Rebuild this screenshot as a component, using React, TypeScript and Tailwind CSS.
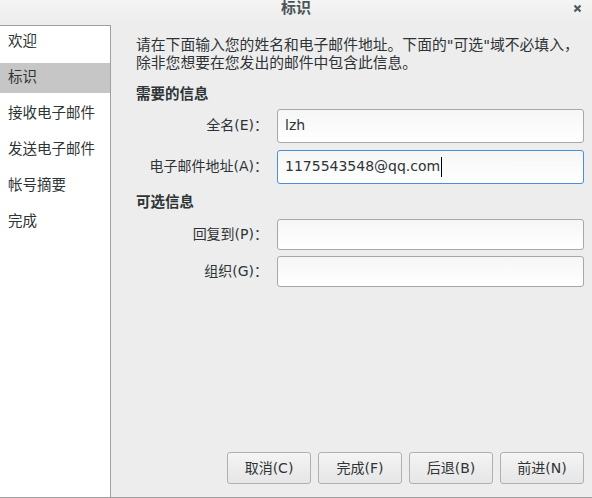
import React from "react";

const font = { fontFamily: '"DejaVu Sans", "Noto Sans CJK SC", sans-serif' };

function Field({ label, value, focused, h }: { label: string; value?: string; focused?: boolean; h: string }) {
  return (
    <div className="flex items-center">
      <div className="w-[133px] pr-[1px] text-right text-[14px] text-[#2e3436]">{label}</div>
      <div
        className={`ml-[8px] flex-1 ${h} flex items-center rounded-[3px] border bg-gradient-to-b from-[#f6f6f6] to-[#ffffff] pl-[7px] text-[14px] text-[#2e3436] ${
          focused ? "border-[#4a90d9]" : "border-[#a8a8a8]"
        }`}
      >
        {value}
        {focused && <span className="ml-[1px] inline-block h-[20px] w-[1px] bg-black" />}
      </div>
    </div>
  );
}

function Btn({ children }: { children: React.ReactNode }) {
  return (
    <div className="flex h-[32px] w-[84px] items-center justify-center rounded-[3px] border border-[#b0b0b0] bg-gradient-to-b from-[#f4f4f4] to-[#e6e6e6] text-[14px] text-[#2e3436]">
      {children}
    </div>
  );
}

export default function App() {
  const items = ["欢迎", "标识", "接收电子邮件", "发送电子邮件", "帐号摘要", "完成"];
  return (
    <div style={font} className="flex h-[498px] w-[592px] flex-col overflow-hidden border-b border-[#a0a0a0] bg-[#ededed]">
      <div className="relative flex h-[25px] shrink-0 items-center justify-center bg-gradient-to-b from-[#f4f4f4] to-[#ececec]">
        <span className="-mt-[9px] text-[15px] font-bold text-[#4a5459]">标识</span>
        <svg className="absolute right-[10px] top-[4px]" width="9" height="9" viewBox="0 0 9 9">
          <path d="M1.5 1.5 L7.5 7.5 M7.5 1.5 L1.5 7.5" stroke="#4f5b61" strokeWidth="2.2" strokeLinecap="butt" />
        </svg>
      </div>
      <div className="flex flex-1">
        <div className="flex w-[111px] shrink-0 flex-col gap-[6px] border-r border-t border-[#a0a0a0] bg-white pt-[1px]">
          {items.map((it, i) => (
            <div
              key={it}
              className={`flex h-[30px] items-center pl-[8px] text-[14.5px] text-[#2e3436] ${i === 1 ? "bg-[#c6c6c6]" : ""}`}
            >
              {it}
            </div>
          ))}
        </div>
        <div className="flex flex-1 flex-col pl-[25px] pr-[8px]">
          <div className="mt-[11px] whitespace-nowrap text-[14.8px] leading-[18px] text-[#2e3436]">
            请在下面输入您的姓名和电子邮件地址。下面的"可选"域不必填入，
            <br />
            除非您想要在您发出的邮件中包含此信息。
          </div>
          <div className="mt-[12px] text-[14.5px] font-bold text-[#2e3436]">需要的信息</div>
          <div className="mt-[3px] flex flex-col gap-[7px]">
            <Field label="全名(E)：" value="lzh" h="h-[34px]" />
            <Field label="电子邮件地址(A)：" value="1175543548@qq.com" focused h="h-[34px]" />
          </div>
          <div className="mt-[8px] text-[14.5px] font-bold text-[#2e3436]">可选信息</div>
          <div className="mt-[5px] flex flex-col gap-[6px]">
            <Field label="回复到(P)：" h="h-[31px]" />
            <Field label="组织(G)：" h="h-[31px]" />
          </div>
          <div className="flex-1" />
          <div className="mb-[13px] flex justify-end gap-[7px]">
            <Btn>取消(C)</Btn>
            <Btn>完成(F)</Btn>
            <Btn>后退(B)</Btn>
            <Btn>前进(N)</Btn>
          </div>
        </div>
      </div>
    </div>
  );
}
